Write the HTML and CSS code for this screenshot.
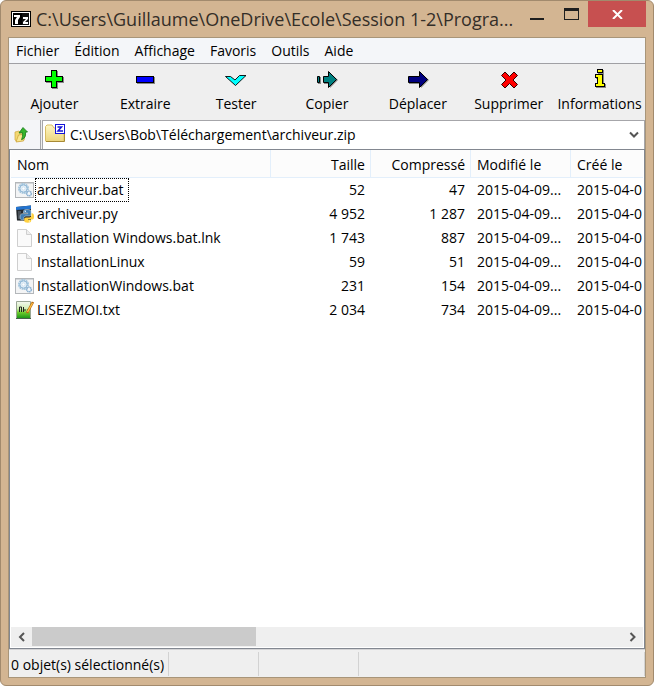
FILE: index.html
```html
<!DOCTYPE html>
<html lang="fr">
<head>
<meta charset="utf-8">
<title>7-Zip</title>
<link rel="stylesheet" href="styles.css">
</head>
<body>
<div class="window">
  <header class="titlebar">
    <svg class="app-icon" width="20" height="16" viewBox="0 0 20 16" aria-hidden="true">
      <rect width="20" height="16" fill="#000"/>
      <rect x="1" y="1" width="18" height="14" fill="#fff"/>
      <rect x="2" y="2" width="9" height="12" fill="#000"/>
      <path d="M3 4h6v2l-2 3v4H4V9l2-3H3z" fill="#fff"/>
      <rect x="11" y="2" width="7" height="12" fill="#111"/>
      <path d="M12 6h5v2l-3 3h3v2h-5v-2l3-3h-3z" fill="#fff"/>
    </svg>
    <h1 class="title">C:\Users\Guillaume\OneDrive\Ecole\Session 1-2\Progra...</h1>
    <div class="caption-buttons">
      <button class="caption minimize" aria-label="Réduire"><svg width="14" height="2" viewBox="0 0 14 2"><path d="M0 0h14v2H0z" fill="#1e1e1e"/></svg></button>
      <button class="caption maximize" aria-label="Agrandir"><svg width="15" height="12" viewBox="0 0 15 12"><path d="M0 0h15v12H0zM1 3v8h13V3z" fill="#1e1e1e" fill-rule="evenodd"/></svg></button>
      <button class="caption close" aria-label="Fermer"><svg width="11" height="9" viewBox="0 0 11 9"><path d="M1 0l9 9M10 0L1 9" stroke="#fff" stroke-width="2"/></svg></button>
    </div>
  </header>

  <main class="client">
    <nav class="menubar">
      <button>Fichier</button><button>Édition</button><button>Affichage</button><button>Favoris</button><button>Outils</button><button>Aide</button>
    </nav>

    <div class="toolbar">
      <button class="tool">
        <svg width="24" height="24" viewBox="0 0 24 24" shape-rendering="crispEdges"><path d="M10 3h6v6h6v6h-6v6h-6v-6H4V9h6z" fill="#888"/><path d="M9 2h6v6h6v6h-6v6H9v-6H3V8h6z" fill="#000"/><path d="M10 3h4v6h6v4h-6v6h-4v-6H4V9h6z" fill="#0f0"/></svg>
        <span>Ajouter</span>
      </button>
      <button class="tool">
        <svg width="24" height="24" viewBox="0 0 24 24" shape-rendering="crispEdges"><path d="M4 9h18v7H4z" fill="#888"/><path d="M3 8h18v7H3z" fill="#000"/><path d="M4 9h16v5H4z" fill="#00f"/></svg>
        <span>Extraire</span>
      </button>
      <button class="tool">
        <svg width="24" height="24" viewBox="0 0 24 24"><path d="M1.500 8.500h5l4.500 3.500 4.500-4.500h6.500L11.500 17.500z" fill="#0ff" stroke="#000" stroke-width=".9"/></svg>
        <span>Tester</span>
      </button>
      <button class="tool">
        <svg width="24" height="24" viewBox="0 0 24 24"><path d="M3 9h3v7H3zM9 9h6V5l8 7-8 8v-4H9z" fill="#888"/><path d="M2.500 8.500h2v6h-2zM8.500 8.500h5v-5l8 8-8 8v-5h-5z" fill="#008080" stroke="#000"/></svg>
        <span>Copier</span>
      </button>
      <button class="tool">
        <svg width="24" height="24" viewBox="0 0 24 24"><path d="M3 9h12V5l8 7-8 8v-4H3z" fill="#888"/><path d="M2.500 8.500h11v-5l8 8-8 8v-5h-11z" fill="#000080" stroke="#000"/></svg>
        <span>Déplacer</span>
      </button>
      <button class="tool">
        <svg width="24" height="24" viewBox="0 0 24 24"><path d="M8 4l4.500 4.500L17 4l3.500 3.500L16 12l4.500 4.500L17 20l-4.500-4.500L8 20l-3.500-3.500L9 12 4.500 7.500z" fill="#f00" stroke="#300" stroke-width="1"/></svg>
        <span>Supprimer</span>
      </button>
      <button class="tool">
        <svg width="24" height="24" viewBox="0 0 24 24" shape-rendering="crispEdges"><path d="M10 2h6v5h-6zM8 7h8v9h2v4H8v-4h2v-5H8z" fill="#888"/><path d="M9 1h6v4H9zM7 6h8v9h2v4H7v-4h2v-5H7z" fill="#000"/><path d="M10 2h4v2h-4zM8 7h6v9h2v2H8v-2h2v-7H8z" fill="#ff0"/></svg>
        <span>Informations</span>
      </button>
    </div>

    <div class="address">
      <button class="up" aria-label="Dossier parent">
        <svg width="16" height="16" viewBox="0 0 16 16"><path d="M1 5l4-1 1 1 4-1v9l-7 1.500L1 13z" fill="#f3d873" stroke="#cfa63a" stroke-width=".7"/><path d="M2 15L4.500 8l7-1-2 7z" fill="#fae68d" stroke="#c99e35" stroke-width=".7"/><path d="M9 .5l4.500 4.500-2 .2c.5 4-.8 6.500-4 7.500 1-2.500 1.300-4 1-7L5 6z" fill="#35b52c" stroke="#167a1b" stroke-width=".8"/></svg>
      </button>
      <div class="combo">
        <svg width="20" height="19" viewBox="0 0 20 19" aria-hidden="true"><defs><linearGradient id="folder" x1="0" y1="0" x2="0" y2="1"><stop offset="0" stop-color="#fff7c5"/><stop offset="1" stop-color="#ecd57e"/></linearGradient></defs><path d="M.5 17V2.500L2 1h5l2 3h10v13.500H1z" fill="url(#folder)" stroke="#d8bd63"/><path d="M1 17.500h18.500V10" fill="none" stroke="#a88a36"/><rect x="10.500" y=".5" width="9" height="9" fill="#fff" stroke="#1414d8"/><path d="M12.500 3h4l-3.500 4H18" fill="none" stroke="#1414d8" stroke-width="1.500"/></svg>
        <input type="text" aria-label="Chemin" value="C:\Users\Bob\Téléchargement\archiveur.zip">
        <button class="drop" aria-label="Afficher la liste"><svg width="10" height="8" viewBox="0 0 10 8"><path d="M1 1.500l4 4 4-4" fill="none" stroke="#555" stroke-width="2"/></svg></button>
      </div>
    </div>

    <section class="list">
      <div class="viewport">
        <table>
          <colgroup><col class="c-name"><col class="c-data"><col class="c-data"><col class="c-data"><col></colgroup>
          <thead><tr><th>Nom</th><th class="num">Taille</th><th class="num">Compressé</th><th>Modifié le</th><th>Créé le</th></tr></thead>
          <tbody>
            <tr><td><div class="file"><svg width="20" height="18"><use href="#i-bat"/></svg><span class="focused">archiveur.bat</span></div></td><td class="num">52</td><td class="num">47</td><td>2015-04-09...</td><td>2015-04-0</td></tr>
            <tr><td><div class="file"><svg width="20" height="18"><use href="#i-py"/></svg><span>archiveur.py</span></div></td><td class="num">4 952</td><td class="num">1 287</td><td>2015-04-09...</td><td>2015-04-0</td></tr>
            <tr><td><div class="file"><svg width="20" height="18"><use href="#i-doc"/></svg><span>Installation Windows.bat.lnk</span></div></td><td class="num">1 743</td><td class="num">887</td><td>2015-04-09...</td><td>2015-04-0</td></tr>
            <tr><td><div class="file"><svg width="20" height="18"><use href="#i-doc"/></svg><span>InstallationLinux</span></div></td><td class="num">59</td><td class="num">51</td><td>2015-04-09...</td><td>2015-04-0</td></tr>
            <tr><td><div class="file"><svg width="20" height="18"><use href="#i-bat"/></svg><span>InstallationWindows.bat</span></div></td><td class="num">231</td><td class="num">154</td><td>2015-04-09...</td><td>2015-04-0</td></tr>
            <tr><td><div class="file"><svg width="20" height="18"><use href="#i-txt"/></svg><span>LISEZMOI.txt</span></div></td><td class="num">2 034</td><td class="num">734</td><td>2015-04-09...</td><td>2015-04-0</td></tr>
          </tbody>
        </table>
      </div>
      <div class="scrollbar">
        <button aria-label="Défiler à gauche"><svg width="8" height="10" viewBox="0 0 8 10"><path d="M6 1L2 5l4 4" fill="none" stroke="#555" stroke-width="2"/></svg></button>
        <div class="track"><div class="thumb"></div></div>
        <button aria-label="Défiler à droite"><svg width="8" height="10" viewBox="0 0 8 10"><path d="M1.500 1l4 4-4 4" fill="none" stroke="#555" stroke-width="2"/></svg></button>
      </div>
    </section>

    <footer class="status">
      <div class="part first">0 objet(s) sélectionné(s)</div><div class="part"></div><div class="part"></div><div class="part rest"></div>
    </footer>
  </main>
</div>

<svg class="sprite" width="0" height="0" aria-hidden="true">
  <symbol id="i-bat" viewBox="0 0 20 18">
    <rect x=".5" y="1.500" width="18" height="15" fill="#f3f4f5" stroke="#b4b7ba"/>
    <path d="M1 2.500h17" stroke="#d4d7da"/>
    <circle cx="8.500" cy="7.500" r="4.500" fill="none" stroke="#a4c6de" stroke-width="2" stroke-dasharray="1.800 .5"/>
    <circle cx="8.500" cy="7.500" r="3.600" fill="#e6f1f9" stroke="#93b9d6"/>
    <circle cx="8.500" cy="7.500" r="1.600" fill="#fff" stroke="#c3d9e9" stroke-width=".7"/>
    <circle cx="14" cy="12.500" r="2.300" fill="#f3f8fc" stroke="#8aafd0" stroke-width="1.600" stroke-dasharray="1.400 .4"/>
  </symbol>
  <symbol id="i-py" viewBox="0 0 20 18">
    <path d="M1 2l15-1.500V16L2 15.500z" fill="#23282d"/><path d="M1 2l15-1.500V4L1 5z" fill="#2474cf"/><path d="M3 6h3v8H3z" fill="#49515a"/>
    <path d="M12 4.500c-3 0-3.500.9-3.500 2.200V8h4.200v.7H7.500C6 8.700 5 10 5 12s1 3 2.200 3h1.500v-1.700c0-1.300 1-2.300 2.300-2.300h3.300c1 0 1.800-.8 1.800-1.800V6.700c0-1.400-1.100-2.200-4.100-2.200z" fill="#3f7db3" stroke="#dfe8ef" stroke-width=".5"/>
    <path d="M16.500 8.200v2c0 1.300-1 2.200-2.200 2.200H11c-1 0-1.800.8-1.800 1.800v1.500c0 1.300 1.200 2 3.500 2s3.500-.8 3.500-2V15H13v-.6h4.300c1.300 0 1.700-1.200 1.700-3 0-2.200-.8-3.200-2-3.200z" fill="#ffd140"/>
    <circle cx="10.300" cy="6.300" r=".7" fill="#fff"/><circle cx="14.400" cy="16" r=".6" fill="#fff"/>
  </symbol>
  <symbol id="i-doc" viewBox="0 0 20 18">
    <path d="M2.500.5h9l5 5v12h-14z" fill="#fafafa" stroke="#cfcfcf"/><path d="M11.500.5v5h5" fill="#eee" stroke="#cfcfcf"/>
  </symbol>
  <symbol id="i-txt" viewBox="0 0 20 18">
    <defs><linearGradient id="green" x1="0" y1="0" x2="0" y2="1"><stop offset="0" stop-color="#f4f8f0"/><stop offset=".4" stop-color="#d4f0b8"/><stop offset=".65" stop-color="#6ccb2c"/><stop offset="1" stop-color="#169316"/></linearGradient></defs>
    <path d="M1.500.5h14v17h-14z" fill="url(#green)" stroke="#9aa694"/><path d="M1 17.500h15" stroke="#48604a"/>
    <path d="M4.500 11V6h2v5M8.500 6v5M9 9h2M12 9h1" fill="none" stroke="#222"/>
    <path d="M12 12L18 1" stroke="#b66a16" stroke-width="2.600"/><path d="M12.500 11L17.500 2" stroke="#ffc247" stroke-width="1.300"/>
  </symbol>
</svg>
</body>
</html>
```
FILE: styles.css
```css
* { box-sizing: border-box; }

body {
  margin: 0;
  background: #fff;
  color: #000;
  font: 14px/20px "Open Sans", "Noto Sans", sans-serif;
}

button, input {
  margin: 0;
  padding: 0;
  border: 0;
  background: none;
  color: inherit;
  font: inherit;
}

svg { display: block; flex: none; }

.window {
  display: flex;
  flex-direction: column;
  height: 100vh;
  padding: 0 7px 7px;
  border: 1px solid #a28a6d;
  border-radius: 6px;
  background: #d3b592;
}

.titlebar {
  display: flex;
  flex: none;
  height: 36px;
  padding-left: 3px;
}

.app-icon { margin-top: 10px; }

.title {
  flex: 1;
  min-width: 0;
  margin: 0;
  padding: 4px 0 0 5px;
  overflow: hidden;
  color: #332e28;
  font-size: 18px;
  font-weight: 400;
  line-height: 28px;
  white-space: nowrap;
}

.caption-buttons { display: flex; flex: none; }

.caption {
  display: flex;
  justify-content: center;
  width: 34px;
  height: 26px;
}

.minimize { padding-top: 17px; }
.maximize { padding-top: 7px; }

.close {
  align-items: center;
  width: 58px;
  background: #c75050;
}

.client {
  display: flex;
  flex: 1;
  flex-direction: column;
  min-height: 0;
  border: 1px solid #a89579;
  background: #efefef;
}

.menubar {
  display: flex;
  flex: none;
  gap: 15px;
  height: 26px;
  padding: 0 7px;
  border-bottom: 1px solid #a0a0a4;
  background: #f4f6f9;
}

.toolbar {
  display: flex;
  flex: none;
  height: 56px;
}

.tool {
  display: flex;
  flex: 1 1 0;
  flex-direction: column;
  align-items: center;
  min-width: 0;
  padding-top: 4px;
  gap: 2px;
  white-space: nowrap;
}

.address {
  display: flex;
  flex: none;
  height: 29px;
}

.up {
  display: flex;
  align-items: center;
  width: 32px;
  padding-left: 5px;
  border-right: 1px solid #a6a6aa;
  background: #f4f5f8;
}

.combo {
  display: flex;
  flex: 1;
  align-items: center;
  margin-left: 1px;
  padding: 0 5px 0 2px;
  border: 1px solid #a6a6aa;
  border-bottom: 0;
  background: #fff;
}

.combo > svg { margin-bottom: 4px; }

.combo input {
  flex: 1;
  min-width: 0;
  padding-left: 5px;
  outline: 0;
}

.list {
  display: flex;
  flex: 1;
  flex-direction: column;
  min-height: 0;
  padding: 0 1px 1px;
  border: 1px solid #828790;
  background: #fff;
}

.viewport {
  flex: 1;
  overflow: hidden;
}

table {
  width: 100%;
  border-collapse: separate;
  border-spacing: 0;
  table-layout: fixed;
}

.c-name { width: 260px; }
.c-data { width: 100px; }

th, td {
  height: 24px;
  padding: 0 0 0 6px;
  overflow: hidden;
  font-weight: 400;
  text-align: left;
  white-space: nowrap;
}

th {
  height: 28px;
  padding-top: 2px;
  border-right: 1px solid #e3effb;
  border-bottom: 1px solid #e3effb;
  background: #fcfcfc;
}

th:last-child { border-right: 0; }

td.num {
  padding: 0 6px 0 0;
  text-align: right;
}

th.num {
  padding: 2px 5px 0 0;
  text-align: right;
}

td:first-child { padding-left: 4px; }

.file {
  display: flex;
  align-items: center;
}

.file span {
  padding: 1px;
  border: 1px solid transparent;
}

.file .focused {
  padding-right: 4px;
  border: 1px dotted #000;
}

.scrollbar {
  display: flex;
  flex: none;
  height: 20px;
  background: #efefef;
}

.scrollbar button {
  display: flex;
  align-items: center;
  justify-content: center;
  width: 21px;
}

.track { flex: 1; }

.thumb {
  width: 38%;
  height: 19px;
  background: #cbcbcb;
}

.status {
  display: flex;
  flex: none;
  height: 28px;
  padding: 2px 0 1px;
  border-top: 1px solid #d4d4d6;
}

.part {
  width: 90px;
  border-right: 1px solid #d2d2d2;
  line-height: 25px;
  white-space: nowrap;
}

.part:nth-child(3) { width: 100px; }

.first {
  width: 160px;
  padding-left: 2px;
}

.rest { flex: 1; }

.sprite { position: absolute; }
```
